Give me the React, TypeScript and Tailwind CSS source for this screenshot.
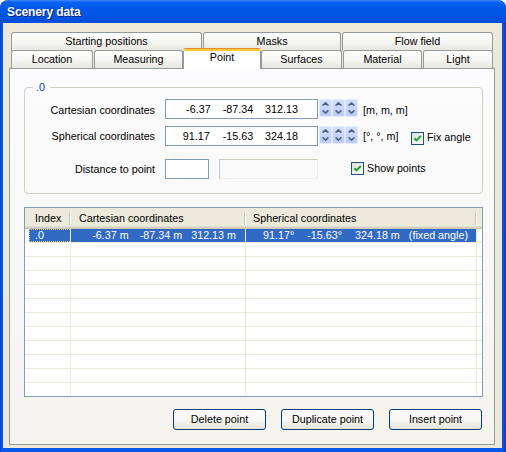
import React from 'react';

function Spin() {
  return (
    <div className="flex h-[18px] w-[13px] flex-col overflow-hidden rounded-[2px] border border-[#E2E9FC] bg-[linear-gradient(to_bottom,#D3DFFC,#BACBF6)]">
      <div className="flex flex-1 items-center justify-center">
        <svg width="7" height="4" viewBox="0 0 7 4">
          <path d="M0.6 3.6 L3.5 0.9 L6.4 3.6" fill="none" stroke="#4D6185" strokeWidth="1.6" />
        </svg>
      </div>
      <div className="flex flex-1 items-center justify-center">
        <svg width="7" height="4" viewBox="0 0 7 4">
          <path d="M0.6 0.4 L3.5 3.1 L6.4 0.4" fill="none" stroke="#4D6185" strokeWidth="1.6" />
        </svg>
      </div>
    </div>
  );
}

function Check() {
  return (
    <span className="flex h-[13px] w-[13px] shrink-0 items-center justify-center border border-[#1C5180] bg-[linear-gradient(135deg,#DCDCD7,#FFFFFF)]">
      <svg width="9" height="9" viewBox="0 0 9 9">
        <path d="M1.4 4.2 L3.5 6.4 L7.8 2" fill="none" stroke="#21A121" strokeWidth="2" />
      </svg>
    </span>
  );
}

function BackTab({ label, w, first }: { label: string; w: string; first?: boolean }) {
  return (
    <div
      className={`${w} ${first ? '' : 'ml-[1px]'} flex h-[19px] items-start justify-center rounded-t-[3px] border border-b-0 border-[#919B9C] bg-[linear-gradient(to_bottom,#FFFFFF,#F3F3EF_60%,#E6E5DE)] pt-[2px] leading-[13px]`}
    >
      {label}
    </div>
  );
}

function FrontTab({ label, w, ml }: { label: string; w: string; ml: string }) {
  return (
    <div
      className={`${w} ${ml} mb-[1px] flex h-[18px] items-center justify-center rounded-t-[3px] border border-b-0 border-[#919B9C] bg-[linear-gradient(to_bottom,#FFFFFF,#F3F3EF_60%,#E6E5DE)] leading-[13px]`}
    >
      {label}
    </div>
  );
}

function NumBox({ values, gaps }: { values: string[]; gaps: string[] }) {
  return (
    <div className="flex h-[20px] w-[153px] items-center justify-end border border-[#7F9DB9] bg-white pr-[19px] leading-[13px]">
      {values.map((v, i) => (
        <span key={v} className={gaps[i]}>
          {v}
        </span>
      ))}
    </div>
  );
}

export default function App() {
  const emptyRows = Array.from({ length: 11 });

  return (
    <div className="h-[452px] w-[506px] overflow-hidden bg-white font-['Liberation_Sans',Arial,sans-serif] text-[10.75px] text-black">
      <div className="flex h-full w-full flex-col rounded-t-[8px] bg-[linear-gradient(to_right,#0040D0,#0858EA_2px,#0858EA_calc(100%-3px),#0036B8)]">
        {/* title bar */}
        <div className="flex h-[23px] shrink-0 items-center rounded-t-[8px] bg-[linear-gradient(to_bottom,#3A8CFA_0%,#0A62F0_10%,#0058E8_35%,#0054E3_70%,#004DDA_100%)] pl-[7px] pt-[1px]">
          <span className="text-[12px] font-bold tracking-[-0.1px] text-white [text-shadow:1px_1px_0_#0A1E8A]">
            Scenery data
          </span>
        </div>

        {/* client area */}
        <div className="mb-[4px] ml-[3px] mr-[4px] flex-1 bg-[#ECE9D8] pl-[6px] pt-[9px]">
          <div className="w-[486px]">
            {/* back tab row */}
            <div className="flex h-[18px] pl-[2px]">
              <BackTab label="Starting positions" w="w-[191px]" first />
              <BackTab label="Masks" w="w-[138px]" />
              <BackTab label="Flow field" w="w-[151px]" />
            </div>

            {/* front tab row */}
            <div className="relative z-10 -mb-[1px] flex h-[19px] items-end pl-[2px]">
              <FrontTab label="Location" w="w-[82px]" ml="" />
              <FrontTab label="Measuring" w="w-[89px]" ml="ml-[1px]" />
              <div className="flex h-[21px] w-[78px] flex-col overflow-hidden rounded-t-[3px] bg-white">
                <div className="h-[1px] bg-[#E68B2C]" />
                <div className="h-[2px] bg-[#FFC73C]" />
                <div className="flex flex-1 justify-center border-x border-[#919B9C] bg-white leading-[13px]">
                  Point
                </div>
              </div>
              <FrontTab label="Surfaces" w="w-[81px]" ml="" />
              <FrontTab label="Material" w="w-[79px]" ml="ml-[1px]" />
              <FrontTab label="Light" w="w-[70px]" ml="ml-[1px]" />
            </div>

            {/* tab page */}
            <div className="h-[377px] w-[486px] border border-[#919B9C] bg-[linear-gradient(to_bottom,#FCFCFE,#F4F3EE)] pl-[14px] pt-[18px]">
              {/* group box */}
              <div className="relative h-[107px] w-[459px] rounded-[4px] border border-[#D0D0BF]">
                <span className="absolute -top-[7px] left-[8px] bg-[#FBFBFB] pl-[3px] pr-[5px] leading-[13px] text-[#0046D5]">
                  .0
                </span>

                <div className="mt-[11px] flex items-start">
                  <span className="mt-[5px] w-[130px] text-right leading-[13px]">Cartesian coordinates</span>
                  <div className="ml-[10px]">
                    <NumBox values={['-6.37', '-87.34', '312.13']} gaps={['', 'ml-[12px]', 'ml-[12px]']} />
                  </div>
                  <div className="ml-[1px] flex">
                    <Spin />
                    <Spin />
                    <Spin />
                  </div>
                  <span className="ml-[5px] mt-[5px] leading-[13px]">[m, m, m]</span>
                </div>

                <div className="mt-[7px] flex items-start">
                  <span className="mt-[4px] w-[130px] text-right leading-[13px]">Spherical coordinates</span>
                  <div className="ml-[10px]">
                    <NumBox values={['91.17', '-15.63', '324.18']} gaps={['', 'ml-[13px]', 'ml-[12px]']} />
                  </div>
                  <div className="ml-[1px] flex">
                    <Spin />
                    <Spin />
                    <Spin />
                  </div>
                  <span className="ml-[5px] mt-[4px] w-[48px] leading-[13px]">[°, °, m]</span>
                  <div className="mt-[6px]">
                    <Check />
                  </div>
                  <span className="ml-[3px] mt-[5px] leading-[13px]">Fix angle</span>
                </div>

                <div className="mt-[13px] flex items-start">
                  <span className="mt-[4px] w-[130px] text-right leading-[13px]">Distance to point</span>
                  <div className="ml-[10px] h-[20px] w-[44px] border border-[#7F9DB9] bg-white" />
                  <div className="ml-[10px] h-[20px] w-[99px] border border-[#C9C7BA] border-b-[#EFEEE8] border-r-[#EFEEE8]" />
                  <div className="ml-[33px] mt-[3px]">
                    <Check />
                  </div>
                  <span className="ml-[3px] mt-[3px] leading-[13px]">Show points</span>
                </div>
              </div>

              {/* list view */}
              <div className="mt-[13px] h-[190px] w-[459px] overflow-hidden border border-[#7F9DB9] bg-white">
                <div className="flex h-[21px] items-start bg-[linear-gradient(to_bottom,#EBEADB_0,#EBEADB_18px,#E2DECD_18px,#E2DECD_19px,#D6D2C2_19px,#D6D2C2_20px,#CBC7B8_20px)]">
                  <div className="w-[44px] pl-[10px] pt-[4px] leading-[13px]">Index</div>
                  <div className="mt-[4px] h-[13px] w-[2px] border-l border-r border-l-[#C7C5B2] border-r-white" />
                  <div className="w-[173px] pl-[8px] pt-[4px] leading-[13px]">Cartesian coordinates</div>
                  <div className="mt-[4px] h-[13px] w-[2px] border-l border-r border-l-[#C7C5B2] border-r-white" />
                  <div className="w-[229px] pl-[7px] pt-[4px] leading-[13px]">Spherical coordinates</div>
                  <div className="mt-[4px] h-[13px] w-[2px] border-l border-r border-l-[#C7C5B2] border-r-white" />
                </div>

                {/* selected row */}
                <div className="flex h-[14px] border-b border-[#EDEAD7] leading-[13px] text-white">
                  <div className="flex w-[46px] border-r border-[#EDEAD7] pl-[4px]">
                    <div className="flex-1 border border-r-0 border-dotted border-[#E9C27A] bg-[#316AC5] pl-[5px] leading-[11px]">
                      .0
                    </div>
                  </div>
                  <div className="flex w-[175px] justify-end border-r border-[#EDEAD7] bg-[#316AC5] pr-[9px]">
                    <span>-6.37 m</span>
                    <span className="ml-[11px]">-87.34 m</span>
                    <span className="ml-[9px]">312.13 m</span>
                  </div>
                  <div className="flex w-[231px] justify-end border-r border-[#EDEAD7] bg-[#316AC5] pr-[8px]">
                    <span>91.17°</span>
                    <span className="ml-[13px]">-15.63°</span>
                    <span className="ml-[13px]">324.18 m</span>
                    <span className="ml-[9px]">(fixed angle)</span>
                  </div>
                </div>

                {emptyRows.map((_, i) => (
                  <div key={i} className="flex h-[14px] border-b border-[#EDEAD7]">
                    <div className="w-[46px] border-r border-[#EDEAD7]" />
                    <div className="w-[175px] border-r border-[#EDEAD7]" />
                    <div className="w-[231px] border-r border-[#EDEAD7]" />
                  </div>
                ))}
              </div>

              {/* buttons */}
              <div className="mt-[12px] flex w-[458px] justify-end gap-[15px]">
                {['Delete point', 'Duplicate point', 'Insert point'].map((b) => (
                  <button
                    key={b}
                    className="h-[21px] w-[93px] rounded-[3px] border border-[#003C74] bg-[linear-gradient(to_bottom,#FFFFFF,#F4F4F0_60%,#E4E2D8)] text-[10.75px] leading-[13px] text-black"
                  >
                    {b}
                  </button>
                ))}
              </div>
            </div>
          </div>
        </div>
      </div>
    </div>
  );
}
